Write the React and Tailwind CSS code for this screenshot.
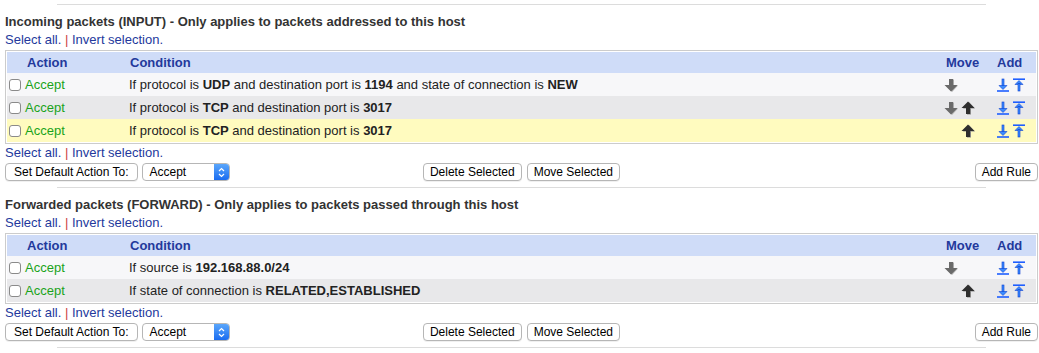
import React from 'react';

const INPUT_RULES = [
    {
        bg: 'bg-[#f7f7f9]',
        down: true,
        up: false,
        cond: <>If protocol is <b>UDP</b> and destination port is <b>1194</b> and state of connection is <b>NEW</b></>,
    },
    {
        bg: 'bg-[#e8e8ea]',
        down: true,
        up: true,
        cond: <>If protocol is <b>TCP</b> and destination port is <b>3017</b></>,
    },
    {
        bg: 'bg-[#fffbbf]',
        down: false,
        up: true,
        cond: <>If protocol is <b>TCP</b> and destination port is <b>3017</b></>,
    },
];

const FORWARD_RULES = [
    {
        bg: 'bg-[#f7f7f9]',
        down: true,
        up: false,
        cond: <>If source is <b>192.168.88.0/24</b></>,
    },
    {
        bg: 'bg-[#e8e8ea]',
        down: false,
        up: true,
        cond: <>If state of connection is <b>RELATED,ESTABLISHED</b></>,
    },
];

function MoveArrow({ dir }) {
    const down = dir === 'down';
    return (
        <svg width="14" height="14" viewBox="0 0 14 14">
            <path
                d={down ? 'M6 1.5h4v6h4l-6 6.5-6-6.5h4z' : 'M6 13.5h4v-6h4L8 1 2 7.5h4z'}
                fill={down ? '#aaa' : '#888'}
            />
            <path
                d={down ? 'M5 1h4v6h4.5L7 13.5.5 7H5z' : 'M5 13h4V7h4.5L7 .5.5 7H5z'}
                fill={down ? '#6a6a6a' : '#2e2e2e'}
            />
        </svg>
    );
}

function AddArrow({ dir }) {
    if (dir === 'down') {
        return (
            <svg width="14" height="14" viewBox="0 0 14 14">
                <rect x="6" y="1" width="2" height="7.5" fill="#3b8cff" stroke="#0a3fd1" strokeWidth="0.6" />
                <path d="M3 7.5h8l-4 4z" fill="#3b8cff" stroke="#0a3fd1" strokeWidth="0.6" />
                <rect x="1" y="12.2" width="12" height="1.6" fill="#1f5fff" />
            </svg>
        );
    }
    return (
        <svg width="14" height="14" viewBox="0 0 14 14">
            <rect x="1" y="0.4" width="12" height="1.6" fill="#1f5fff" />
            <path d="M3 6.5h8l-4-4z" fill="#3b8cff" stroke="#0a3fd1" strokeWidth="0.6" />
            <rect x="6" y="5.5" width="2" height="7.5" fill="#3b8cff" stroke="#0a3fd1" strokeWidth="0.6" />
        </svg>
    );
}

function Hr({ first }) {
    return <div className={`w-[90%] mx-auto h-px bg-[#dcdcdc] ${first ? 'mt-[4px]' : 'mt-[6px]'}`} />;
}

function SelectLinks() {
    return (
        <div className="h-[16px] leading-[16px] text-[13px] text-[#23399c]">
            Select all. <span className="text-[#c44]">|</span> Invert selection.
        </div>
    );
}

function Button({ children, wide }) {
    return (
        <button
            className={`h-[18px] ${wide ? 'px-[8px]' : 'px-[6px]'} rounded-[4px] border border-[#b6b6b6] bg-white text-[12px] leading-none text-black shadow-[0_1px_0_rgba(0,0,0,0.06)]`}
        >
            {children}
        </button>
    );
}

function FakeSelect() {
    return (
        <div className="h-[18px] w-[88px] flex rounded-[4px] border border-[#b6b6b6] bg-white overflow-hidden">
            <span className="flex-1 pl-[7px] text-[12px] leading-[16px] text-black">Accept</span>
            <span className="w-[15px] flex flex-col items-center justify-center bg-gradient-to-b from-[#5aa6fb] to-[#1a6cf0]">
                <svg width="7" height="11" viewBox="0 0 7 11">
                    <path d="M1 4l2.5-2.5L6 4M1 7l2.5 2.5L6 7" fill="none" stroke="#fff" strokeWidth="1.2" />
                </svg>
            </span>
        </div>
    );
}

function RuleTable({ rules }) {
    return (
        <div className="mt-[2px] border border-[#cccccc] p-[1px]">
            <div className="h-[21px] flex items-center bg-[#cfdcf8] text-[13px] font-bold text-[#23399c]">
                <div className="w-[122px] pl-[20px]">Action</div>
                <div className="flex-1 pl-[1px]">Condition</div>
                <div className="w-[50px] pl-[6px]">Move</div>
                <div className="w-[46px] pl-[7px]">Add</div>
            </div>
            {rules.map((r, i) => (
                <div key={i} className={`h-[23px] flex items-center text-[13px] text-[#222] ${r.bg}`}>
                    <div className="w-[122px] flex items-center">
                        <span className="ml-[2px] w-[12px] h-[12px] rounded-[3px] border border-[#8a8a8a] bg-white" />
                        <span className="ml-[4px] text-[#1aa31a]">Accept</span>
                    </div>
                    <div className="flex-1">{r.cond}</div>
                    <div className="w-[50px] pl-[4px] flex gap-[3px]">
                        <span className="w-[14px] h-[14px]">{r.down && <MoveArrow dir="down" />}</span>
                        <span className="w-[14px] h-[14px]">{r.up && <MoveArrow dir="up" />}</span>
                    </div>
                    <div className="w-[46px] pl-[6px] flex gap-[2px]">
                        <AddArrow dir="down" />
                        <AddArrow dir="up" />
                    </div>
                </div>
            ))}
        </div>
    );
}

function Section({ title, rules }) {
    return (
        <div>
            <h2 className="mt-[8px] h-[16px] leading-[17px] text-[13px] font-bold text-[#333]">{title}</h2>
            <div className="mt-[3px]">
                <SelectLinks />
            </div>
            <RuleTable rules={rules} />
            <div className="mt-[1px]">
                <SelectLinks />
            </div>
            <div className="mt-[2px] grid grid-cols-3 items-center">
                <div className="flex gap-[4px]">
                    <Button wide>Set Default Action To:</Button>
                    <FakeSelect />
                </div>
                <div className="flex justify-center gap-[5px]">
                    <Button>Delete Selected</Button>
                    <Button>Move Selected</Button>
                </div>
                <div className="flex justify-end">
                    <Button>Add Rule</Button>
                </div>
            </div>
        </div>
    );
}

export default function App() {
    return (
        <div className="w-[1039px] h-[353px] overflow-hidden bg-white pl-[5px] pr-[1px] font-['Liberation_Sans',Arial,sans-serif]">
            <Hr first />
            <Section title="Incoming packets (INPUT) - Only applies to packets addressed to this host" rules={INPUT_RULES} />
            <Hr />
            <Section title="Forwarded packets (FORWARD) - Only applies to packets passed through this host" rules={FORWARD_RULES} />
            <Hr />
        </div>
    );
}
